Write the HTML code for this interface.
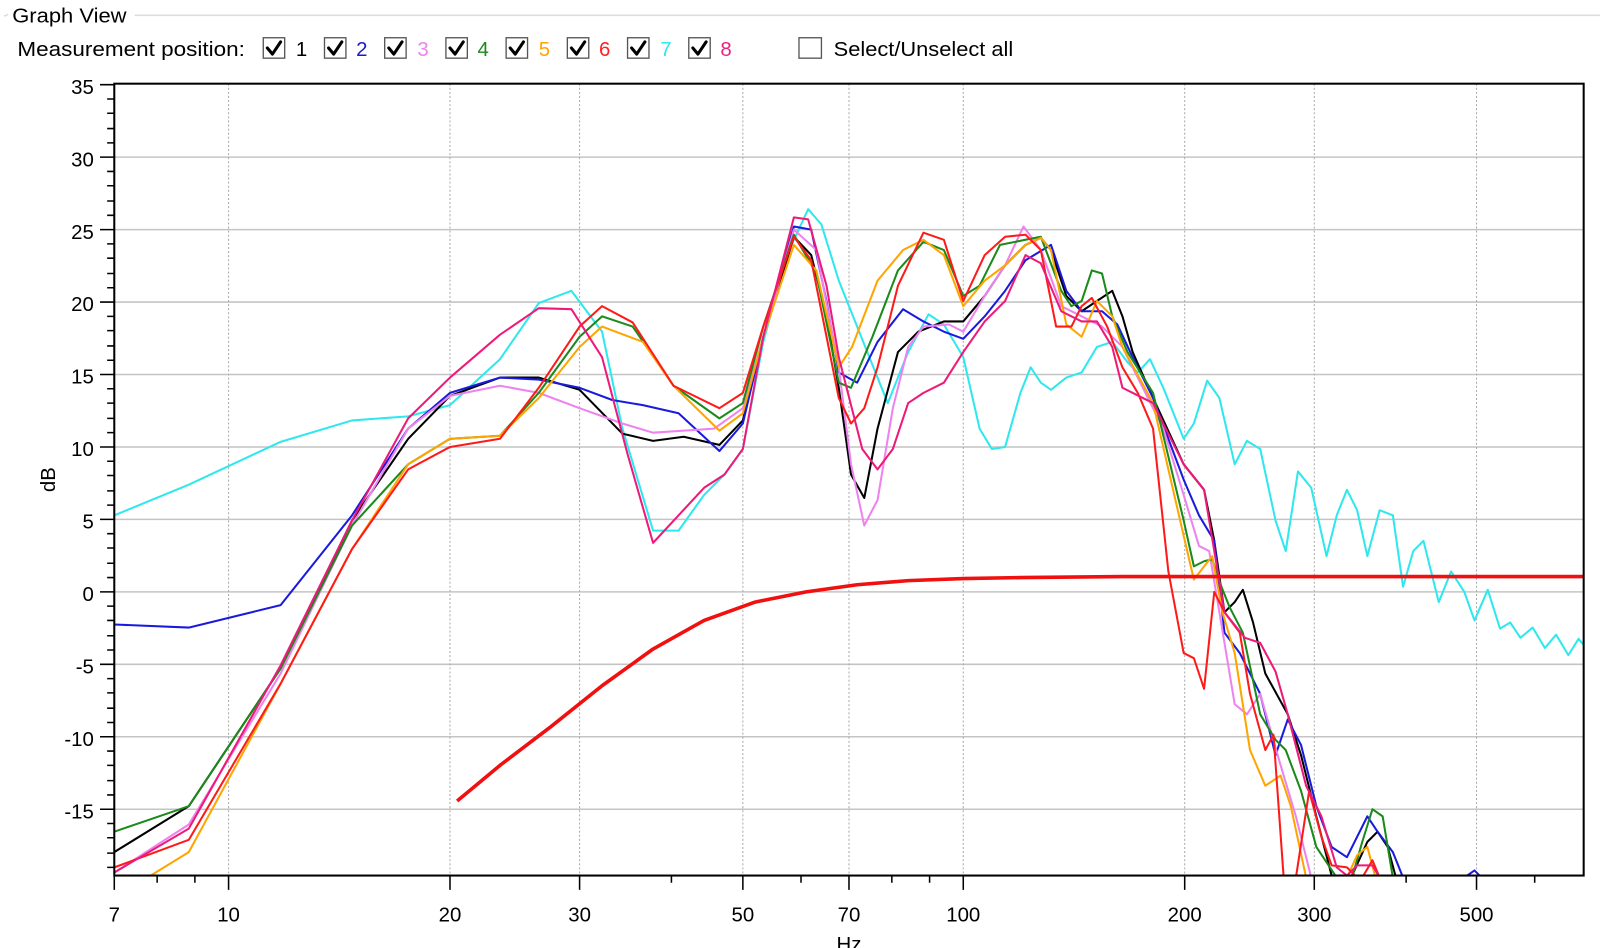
<!DOCTYPE html>
<html><head><meta charset="utf-8"><style>
html,body{margin:0;padding:0;background:#fff;width:1600px;height:948px;overflow:hidden}
svg{display:block}
text{font-family:"Liberation Sans",sans-serif;}
</style></head><body>
<svg width="1600" height="948" viewBox="0 0 1568 929" preserveAspectRatio="none" xmlns="http://www.w3.org/2000/svg">
<defs><clipPath id="c"><rect x="112" y="82" width="1440" height="776"/></clipPath></defs>
<path d="M4,16 L8,14 M132,15 L1568,15" stroke="#d8dde0" stroke-width="1.5" fill="none"/>
<text x="12" y="22" font-size="20" fill="#000" textLength="112" lengthAdjust="spacingAndGlyphs">Graph View</text>
<text x="17" y="55" font-size="20" fill="#000" textLength="223" lengthAdjust="spacingAndGlyphs">Measurement position:</text>
<g stroke="#555" stroke-width="1.3" fill="#fff">
<rect x="258" y="37" width="21" height="20"/><rect x="318" y="37" width="21" height="20"/><rect x="377" y="37" width="21" height="20"/><rect x="437" y="37" width="21" height="20"/><rect x="496" y="37" width="21" height="20"/><rect x="556" y="37" width="21" height="20"/><rect x="615" y="37" width="21" height="20"/><rect x="675" y="37" width="21" height="20"/><rect x="783" y="37" width="22" height="20"/>
</g>
<g stroke="#000" stroke-width="3" fill="none" stroke-linecap="round" stroke-linejoin="round">
<path d="M262,47 l5,6 l8,-12"/><path d="M322,47 l5,6 l8,-12"/><path d="M381,47 l5,6 l8,-12"/><path d="M441,47 l5,6 l8,-12"/><path d="M500,47 l5,6 l8,-12"/><path d="M560,47 l5,6 l8,-12"/><path d="M619,47 l5,6 l8,-12"/><path d="M679,47 l5,6 l8,-12"/>
</g>
<g font-size="20">
<text x="290" y="55" fill="#000">1</text><text x="349" y="55" fill="#1a1acc">2</text><text x="409" y="55" fill="#ee82ee">3</text><text x="468" y="55" fill="#1a8a1a">4</text><text x="528" y="55" fill="#ffa500">5</text><text x="587" y="55" fill="#ff2020">6</text><text x="647" y="55" fill="#2ee8ee">7</text><text x="706" y="55" fill="#ee2080">8</text>
<text x="817" y="55" fill="#000" textLength="176" lengthAdjust="spacingAndGlyphs">Select/Unselect all</text>
</g>
<g stroke="#c4c4c4" stroke-width="1.5">
<line x1="112" x2="1552" y1="154" y2="154"/><line x1="112" x2="1552" y1="225" y2="225"/><line x1="112" x2="1552" y1="296" y2="296"/><line x1="112" x2="1552" y1="367" y2="367"/><line x1="112" x2="1552" y1="438" y2="438"/><line x1="112" x2="1552" y1="509" y2="509"/><line x1="112" x2="1552" y1="580" y2="580"/><line x1="112" x2="1552" y1="651" y2="651"/><line x1="112" x2="1552" y1="722" y2="722"/><line x1="112" x2="1552" y1="793" y2="793"/>
</g>
<g stroke="#aaa" stroke-width="1" stroke-dasharray="2,2">
<line x1="224" x2="224" y1="82" y2="858"/><line x1="441" x2="441" y1="82" y2="858"/><line x1="568" x2="568" y1="82" y2="858"/><line x1="728" x2="728" y1="82" y2="858"/><line x1="832" x2="832" y1="82" y2="858"/><line x1="944" x2="944" y1="82" y2="858"/><line x1="1161" x2="1161" y1="82" y2="858"/><line x1="1288" x2="1288" y1="82" y2="858"/><line x1="1447" x2="1447" y1="82" y2="858"/>
</g>
<g clip-path="url(#c)" fill="none" stroke-width="2" stroke-linejoin="round">
<polyline stroke="#2ee8ee" points="112,505 185,475 275,433 345,412 400,408 441,397 490,352 528,297 560,285 590,325 610,420 640,520 665,520 690,485 710,465 728,440 748,335 772,248 792,205 805,220 822,275 848,340 870,395 890,345 910,308 925,318 944,350 960,420 972,440 985,438 1000,385 1010,360 1020,375 1030,382 1045,370 1060,365 1075,340 1090,335 1105,355 1115,365 1127,352 1140,380 1160,430 1170,415 1183,373 1195,390 1210,455 1222,432 1235,440 1250,510 1260,540 1272,462 1285,478 1300,545 1310,505 1320,480 1330,500 1340,545 1352,500 1365,505 1375,575 1385,540 1395,530 1410,590 1422,560 1435,580 1445,608 1458,578 1470,616 1480,610 1490,625 1502,615 1514,635 1525,622 1537,642 1547,626 1552,632"/>
<polyline stroke="#000" points="112,835 185,790 275,655 345,510 400,430 441,388 490,370 528,370 568,382 610,425 640,432 670,428 705,436 728,412 748,330 778,232 795,250 810,310 822,380 834,465 847,488 860,420 880,345 900,325 925,315 944,315 965,290 985,260 1005,240 1020,233 1030,245 1045,290 1060,305 1075,295 1090,285 1100,310 1110,345 1130,390 1160,455 1180,480 1190,530 1200,600 1210,590 1218,578 1228,610 1240,660 1262,700 1275,740 1290,800 1305,858 1325,858 1340,825 1350,815 1360,830 1368,860"/>
<polyline stroke="#1a1add" points="112,612 185,615 275,593 345,505 400,420 441,385 490,370 528,372 568,380 600,392 630,397 665,405 705,442 728,415 748,330 778,222 795,225 810,295 822,365 840,375 860,335 885,303 905,315 925,325 944,332 965,310 985,285 1005,255 1030,240 1045,285 1060,305 1080,305 1095,318 1110,350 1130,390 1160,470 1175,505 1190,530 1200,620 1215,640 1235,680 1250,740 1262,705 1275,730 1290,790 1305,830 1320,840 1340,800 1350,815 1365,835 1375,860"/>
<polyline stroke="#1a1add" points="1435,860 1445,853 1452,860"/>
<polyline stroke="#ee82ee" points="112,855 185,808 275,660 345,515 400,420 441,388 490,378 528,385 568,400 610,415 640,424 700,420 728,400 748,330 778,225 800,245 822,360 834,455 847,515 860,490 875,400 890,340 905,320 930,318 944,325 965,290 985,260 1003,222 1020,245 1040,300 1060,310 1080,320 1100,340 1110,360 1140,420 1160,485 1175,535 1185,540 1195,600 1210,690 1222,700 1235,680 1255,750 1270,800 1285,860"/>
<polyline stroke="#1a8a1a" points="112,815 185,790 275,655 345,515 400,455 441,430 490,427 528,385 568,330 590,310 620,320 660,378 705,410 728,395 748,320 778,230 800,268 822,375 834,380 855,330 880,265 905,237 925,245 944,290 960,280 980,240 1005,235 1020,232 1040,285 1050,300 1060,295 1070,265 1080,268 1090,310 1105,345 1130,385 1160,510 1170,555 1180,550 1188,548 1197,575 1205,595 1218,620 1235,700 1250,725 1260,735 1275,775 1290,830 1300,845 1310,860"/>
<polyline stroke="#1a8a1a" points="1325,860 1335,825 1345,793 1355,800 1365,860"/>
<polyline stroke="#ffa500" points="112,880 185,835 275,670 345,538 400,455 441,430 490,427 528,390 568,340 590,320 630,335 660,378 705,422 728,405 748,330 778,240 800,265 822,360 835,340 860,275 885,245 905,235 925,250 944,300 965,275 985,260 1005,240 1020,233 1030,245 1045,318 1060,330 1075,295 1090,310 1100,340 1130,395 1160,525 1170,568 1180,555 1188,545 1198,600 1210,640 1225,735 1240,770 1255,760 1265,790 1280,860"/>
<polyline stroke="#ffa500" points="1320,860 1330,838 1340,830 1348,860"/>
<polyline stroke="#ff1a1a" points="112,850 185,823 275,670 345,538 400,460 441,438 490,430 528,380 568,320 590,300 620,316 660,378 705,400 728,385 748,320 778,232 795,255 810,330 822,390 834,415 847,400 860,360 880,280 905,228 925,235 944,295 965,250 985,232 1005,230 1020,245 1035,320 1050,320 1060,300 1070,292 1085,320 1100,360 1115,385 1130,420 1145,560 1160,640 1170,645 1180,675 1190,580 1200,600 1215,620 1225,680 1240,735 1248,720 1258,860"/>
<polyline stroke="#ff1a1a" points="1270,860 1283,775 1295,820 1305,848 1320,850 1330,860"/>
<polyline stroke="#ff1a1a" points="1335,860 1345,843 1352,860"/>
<polyline stroke="#ee1a7a" points="112,855 185,812 275,652 345,510 400,410 441,370 490,328 528,302 560,303 590,350 615,445 640,532 665,505 690,478 710,465 728,440 748,330 778,213 792,215 810,280 822,350 845,440 860,460 875,440 890,395 905,385 925,375 944,345 965,315 985,295 1005,250 1020,258 1040,305 1060,315 1075,315 1090,340 1100,380 1130,395 1160,455 1180,480 1200,600 1220,625 1235,630 1250,658 1262,700 1280,770 1295,800 1310,850 1320,858 1330,848 1345,848 1352,860"/>
<path stroke="#f01010" stroke-width="3.5" d="M448,785 L490,750 L540,712 L590,672 L640,636 L690,608 L740,590 L790,580 L840,573 L890,569 L944,567 L1000,566 L1100,565 L1552,565"/>
</g>
<rect x="112" y="82" width="1440" height="776" fill="none" stroke="#000" stroke-width="2"/>
<g stroke="#000" stroke-width="1.5">
<path d="M98,83h14M98,154h14M98,225h14M98,296h14M98,367h14M98,438h14M98,509h14M98,580h14M98,651h14M98,722h14M98,793h14"/>
<path d="M105,97h7M105,111h7M105,126h7M105,140h7M105,168h7M105,182h7M105,197h7M105,211h7M105,239h7M105,253h7M105,268h7M105,282h7M105,310h7M105,324h7M105,339h7M105,353h7M105,381h7M105,395h7M105,410h7M105,424h7M105,452h7M105,466h7M105,481h7M105,495h7M105,523h7M105,537h7M105,552h7M105,566h7M105,594h7M105,608h7M105,623h7M105,637h7M105,665h7M105,679h7M105,694h7M105,708h7M105,736h7M105,750h7M105,765h7M105,779h7M105,807h7M105,821h7M105,836h7M105,850h7"/>
<path d="M112,858v14M224,858v14M441,858v14M568,858v14M728,858v14M832,858v14M944,858v14M1161,858v14M1288,858v14M1447,858v14"/>
<path d="M154,858v7M191,858v7M658,858v7M785,858v7M874,858v7M911,858v7M1378,858v7M1504,858v7"/>
</g>
<g font-size="20" fill="#000" text-anchor="end">
<text x="92" y="92">35</text><text x="92" y="163">30</text><text x="92" y="234">25</text><text x="92" y="305">20</text><text x="92" y="376">15</text><text x="92" y="447">10</text><text x="92" y="518">5</text><text x="92" y="589">0</text><text x="92" y="660">-5</text><text x="92" y="731">-10</text><text x="92" y="802">-15</text>
</g>
<g font-size="20" fill="#000" text-anchor="middle">
<text x="112" y="903">7</text><text x="224" y="903">10</text><text x="441" y="903">20</text><text x="568" y="903">30</text><text x="728" y="903">50</text><text x="832" y="903">70</text><text x="944" y="903">100</text><text x="1161" y="903">200</text><text x="1288" y="903">300</text><text x="1447" y="903">500</text>
<text x="832" y="932">Hz</text>
</g>
<text x="54" y="470" font-size="20" fill="#000" text-anchor="middle" transform="rotate(-90 54 470)">dB</text>
</svg>
</body></html>
